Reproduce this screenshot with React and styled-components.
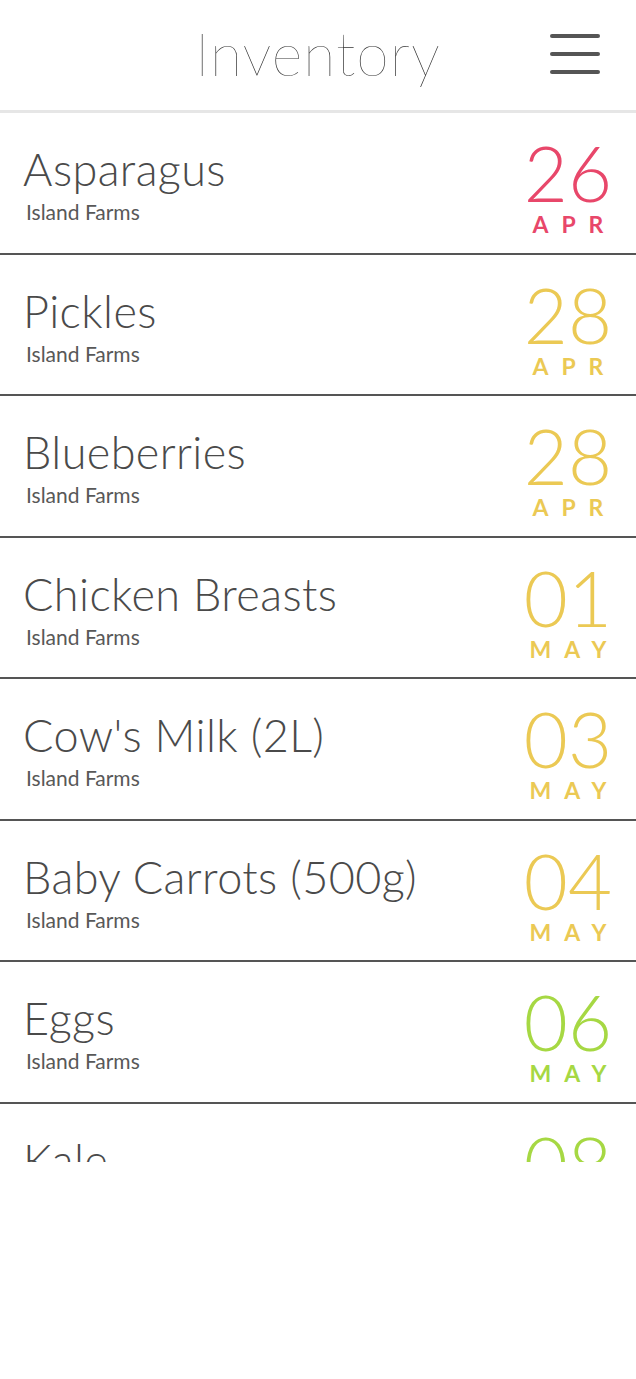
import styled, { createGlobalStyle } from 'styled-components';

const GlobalStyle = createGlobalStyle`
  html, body {
    margin: 0;
    padding: 0;
    background: #ffffff;
  }
  body {
    font-family: "Lato", "Noto Sans", sans-serif;
    color: #4a4a4a;
  }
`;

const items = [
  { name: 'Asparagus', farm: 'Island Farms', day: '26', month: 'APR', tone: 'red' },
  { name: 'Pickles', farm: 'Island Farms', day: '28', month: 'APR', tone: 'yellow' },
  { name: 'Blueberries', farm: 'Island Farms', day: '28', month: 'APR', tone: 'yellow' },
  { name: 'Chicken Breasts', farm: 'Island Farms', day: '01', month: 'MAY', tone: 'yellow' },
  { name: "Cow's Milk (2L)", farm: 'Island Farms', day: '03', month: 'MAY', tone: 'yellow' },
  { name: 'Baby Carrots (500g)', farm: 'Island Farms', day: '04', month: 'MAY', tone: 'yellow' },
  { name: 'Eggs', farm: 'Island Farms', day: '06', month: 'MAY', tone: 'green' },
  { name: 'Kale', farm: 'Island Farms', day: '08', month: 'MAY', tone: 'green' },
];

const tones = {
  red: '#e8476a',
  yellow: '#ebc954',
  green: '#a6d843',
};

const Page = styled.div`
  width: 636px;
  min-height: 1379px;
  background: #fff;
`;

const Header = styled.header`
  height: 110px;
  border-bottom: 3px solid #e6e6e6;
  display: flex;
  align-items: center;
  justify-content: center;
  position: relative;
`;

const Title = styled.h1`
  margin: 0;
  font-family: "Lato", sans-serif;
  font-weight: 100;
  font-size: 59px;
  color: #333;
  letter-spacing: 1px;
  margin-top: -4px;
`;

const MenuButton = styled.button`
  position: absolute;
  right: 36px;
  top: 34px;
  width: 50px;
  height: 40px;
  padding: 0;
  border: 0;
  background: none;
  display: flex;
  flex-direction: column;
  justify-content: space-between;
`;

const Bar = styled.span`
  display: block;
  height: 4px;
  width: 100%;
  border-radius: 2px;
  background: #555;
`;

const List = styled.ul`
  list-style: none;
  margin: 0;
  padding: 0;
  height: 1049px;
  overflow: hidden;
`;

const Row = styled.li`
  height: 139.5px;
  border-bottom: 2px solid #555;
  display: flex;
  align-items: center;
  justify-content: space-between;
  padding: 0 24px 0 23px;
`;

const Info = styled.div`
  display: flex;
  flex-direction: column;
  margin-top: 3px;
`;

const Name = styled.div`
  font-size: 45px;
  font-weight: 300;
  color: #4a4a4a;
  line-height: 50px;
  letter-spacing: 0.4px;
`;

const Farm = styled.div`
  font-size: 21px;
  font-weight: 400;
  color: #585858;
  line-height: 24px;
  margin-left: 3px;
  margin-top: 6px;
`;

const DateBox = styled.div`
  display: flex;
  flex-direction: column;
  align-items: center;
  color: ${p => tones[p.$tone]};
  margin-top: 13px;
`;

const Day = styled.div`
  font-size: 76px;
  font-weight: 300;
  line-height: 64px;
`;

const Month = styled.div`
  font-size: 23px;
  font-weight: 700;
  letter-spacing: 13px;
  margin-right: -13px;
  line-height: 26px;
  margin-top: 6px;
`;

export default function App() {
  return (
    <Page>
      <GlobalStyle />
      <Header>
        <Title>Inventory</Title>
        <MenuButton aria-label="Menu">
          <Bar />
          <Bar />
          <Bar />
        </MenuButton>
      </Header>
      <List>
        {items.map((item, i) => (
          <Row key={i}>
            <Info>
              <Name>{item.name}</Name>
              <Farm>{item.farm}</Farm>
            </Info>
            <DateBox $tone={item.tone}>
              <Day>{item.day}</Day>
              <Month>{item.month}</Month>
            </DateBox>
          </Row>
        ))}
      </List>
    </Page>
  );
}
